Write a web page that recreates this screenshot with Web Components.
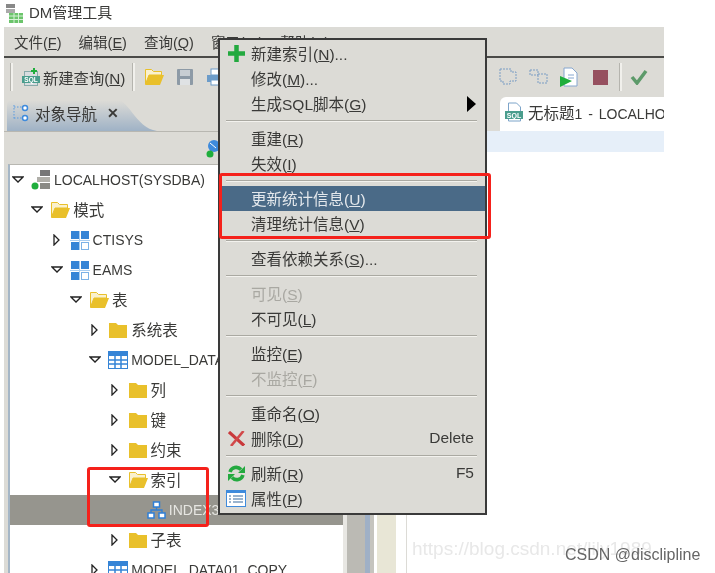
<!DOCTYPE html>
<html>
<head>
<meta charset="utf-8">
<style>
  html, body { margin: 0; padding: 0; background: #fff; }
  body { width: 715px; height: 573px; overflow: hidden; font-family: "Liberation Sans", "Noto Sans CJK SC", sans-serif; }
</style>
</head>
<body>
<dm-app></dm-app>

<script>
const ICONS = {
  folder: '<svg width="20" height="18" viewBox="0 0 20 18"><path d="M1 2h7l2 2h9v13H1z" fill="#e9c02b"/></svg>',
  folderOpen: '<svg width="20" height="18" viewBox="0 0 20 18"><path d="M1.500 16V1.500h6l2 2h8V7H5z" fill="#faf1cf" stroke="#e9c02b"/><path d="M1 17l4-10h15l-4 10z" fill="#e9c02b"/></svg>',
  schema: '<svg width="20" height="19" viewBox="0 0 20 19"><path d="M0 9.500h20M9.500 0v19" stroke="#a9cdf0"/><rect x="1" y="0" width="8" height="8" fill="#3584d6"/><rect x="11" y="0" width="8" height="8" fill="#3584d6"/><rect x="1" y="11" width="8" height="8" fill="#3584d6"/><rect x="11.500" y="11.500" width="7" height="7" fill="#fff" stroke="#7db2e6"/></svg>',
  table: '<svg width="20" height="18" viewBox="0 0 20 18"><rect x=".5" y=".5" width="19" height="17" fill="#fff" stroke="#3584d6"/><rect x="0" y="0" width="20" height="5" fill="#3584d6"/><path d="M1 9h18M1 13h18M7 5v12M13 5v12" stroke="#3584d6" stroke-width="1.500"/></svg>',
  index: '<svg width="19" height="18" viewBox="0 0 19 18"><g fill="#fff" stroke="#2f7fd6" stroke-width="1.500"><rect x="6.500" y="1" width="6" height="5"/><rect x="1" y="12" width="6" height="5"/><rect x="12" y="12" width="6" height="5"/></g><path d="M9.500 6v3M4 12V9h11v3" fill="none" stroke="#2f7fd6" stroke-width="1.300"/></svg>',
  server: '<svg width="20" height="20" viewBox="0 0 20 20"><rect x="9" y="0" width="10" height="6" fill="#777"/><rect x="6" y="7" width="13" height="5" fill="#b0afa9"/><rect x="9" y="13" width="10" height="6" fill="#8a8a85"/><circle cx="4" cy="16" r="3.500" fill="#1fae3c"/></svg>',
  sql: '<svg width="18" height="20" viewBox="0 0 18 20"><path d="M3.500 1h8l4 4v14h-12z" fill="#fff" stroke="#7da4c9"/><rect x="0" y="9" width="18" height="8" fill="#4a9d8d"/><text x="9" y="15.500" font-size="7" font-weight="700" fill="#fff" text-anchor="middle" font-family="Liberation Sans">SQL</text></svg>',
  sqlNew: '<svg width="18" height="20" viewBox="0 0 18 20"><rect x="2.500" y="4.500" width="13" height="14" fill="#d8dde0" stroke="#8aa"/><rect x="0" y="9" width="18" height="7" fill="#4a9d8d"/><text x="9" y="15" font-size="6.500" font-weight="700" fill="#fff" text-anchor="middle" font-family="Liberation Sans">SQL</text><path d="M12 1v6M9 4h6" stroke="#1fae3c" stroke-width="2"/></svg>',
  save: '<svg width="18" height="18" viewBox="0 0 18 18"><rect x="1" y="1" width="16" height="16" rx="1" fill="#8d9aa6"/><rect x="4" y="2" width="10" height="6" fill="#c8ced3"/><rect x="4" y="11" width="10" height="6" fill="#dfe2e4"/></svg>',
  print: '<svg width="18" height="18" viewBox="0 0 18 18"><rect x="5" y="1" width="8" height="6" fill="#fff" stroke="#6c9cc9"/><rect x="1" y="7" width="16" height="7" fill="#6c9cc9"/><rect x="5" y="12" width="8" height="5" fill="#fff" stroke="#6c9cc9"/></svg>',
  plus: '<svg width="17" height="17" viewBox="0 0 17 17"><path d="M8.500 0v17M0 8.500h17" stroke="#23a93f" stroke-width="4.500"/></svg>',
  cross: '<svg width="17" height="15" viewBox="0 0 17 15"><path d="M1 1l15 13.500" stroke="#c9393b" stroke-width="3.200"/><path d="M15.500 0L3 15" stroke="#d2494a" stroke-width="2.600"/></svg>',
  refresh: '<svg width="17" height="17" viewBox="0 0 17 17"><path d="M2 7a6.500 6.500 0 0 1 11-2.500" fill="none" stroke="#23a93f" stroke-width="3.500"/><path d="M15 10a6.500 6.500 0 0 1-11 2.500" fill="none" stroke="#23a93f" stroke-width="3.500"/><path d="M10 8h7V1zM7 9H0v7z" fill="#23a93f"/></svg>',
  props: '<svg width="20" height="17" viewBox="0 0 20 17"><rect x=".5" y=".5" width="19" height="16" fill="#fff" stroke="#3f8bdc"/><rect x="0" y="0" width="20" height="3" fill="#3f8bdc"/><path d="M3 6h2M3 9h2M3 12h2M7 6h10M7 9h10M7 12h10" stroke="#7a9cc0" stroke-width="1.500"/></svg>',
  nav: '<svg width="16" height="18" viewBox="0 0 16 18"><path d="M1 1v15M1 3h8M1 14h8" fill="none" stroke="#5a9be0" stroke-dasharray="1.500 1.500"/><circle cx="12" cy="4" r="2.500" fill="#fff" stroke="#3f8bdc" stroke-width="1.500"/><circle cx="12" cy="14" r="2.500" fill="#fff" stroke="#3f8bdc" stroke-width="1.500"/></svg>',
  check: '<svg width="18" height="16" viewBox="0 0 18 16"><path d="M2 8l5 6L16 2" fill="none" stroke="#5d9a6a" stroke-width="3.500"/></svg>',
  run: '<svg width="18" height="20" viewBox="0 0 18 20"><path d="M4 1h8l5 5v13H4z" fill="#fff" stroke="#86a6cf"/><path d="M8 8h6M8 11h6" stroke="#86a6cf"/><path d="M0 9l12 5-12 6z" fill="#1fae3c"/></svg>',
  stop: '<svg width="15" height="15" viewBox="0 0 15 15"><rect width="15" height="15" fill="#96505f"/></svg>',
  dash1: '<svg width="18" height="18" viewBox="0 0 18 18"><path d="M1 1h11v3h5v9h-6v3H4v-3H1z" fill="none" stroke="#7b9dc4" stroke-dasharray="2 1"/></svg>',
  dash2: '<svg width="19" height="16" viewBox="0 0 19 16"><path d="M1 1h8v5H1zM9 5h9v9H9z" fill="none" stroke="#7b9dc4" stroke-dasharray="2 1"/></svg>'
};

// one line of the object tree
class TreeRow extends HTMLElement {
  connectedCallback() {
    const depth = Number(this.getAttribute('depth'));
    const state = this.getAttribute('state');
    const icon = this.getAttribute('icon');
    const shadow = this.attachShadow({ mode: 'open' });
    shadow.innerHTML = `
      <style>
        :host { display: block; height: 30px; }
        .row { display: flex; align-items: center; height: 100%; gap: 3px; padding-left: ${2 + depth * 19.300}px; color: #3a3a38; font-size: 14px; white-space: nowrap; }
        :host([cjk]) .row { font-size: 15.500px; }
        :host([cjk]) .text { margin-top: -2px; }
        :host([selected]) .row { background: #96958e; color: #e6e6e2; }
        .arrow { width: 12px; height: 12px; flex: none; margin-right: 4px; }
        .icon { display: flex; flex: none; }
      </style>
      <div class="row">
        <svg class="arrow" viewBox="0 0 12 12">${
          state === 'open' ? '<path d="M1 3h10L6 8z" fill="#fff" stroke="#222" stroke-width="1.300"/>' :
          state === 'closed' ? '<path d="M3 1v10l5-5z" fill="#fff" stroke="#222" stroke-width="1.300"/>' : ''}</svg>
        <span class="icon">${ICONS[icon]}</span>
        <span class="text"><slot></slot></span>
      </div>`;
  }
}

// entry of the context menu
class MenuItem extends HTMLElement {
  connectedCallback() {
    const icon = this.getAttribute('icon');
    const key = this.getAttribute('key') || '';
    const shadow = this.attachShadow({ mode: 'open' });
    shadow.innerHTML = `
      <style>
        :host { display: flex; align-items: center; height: 25px; padding: 0 11px 0 31px; font-size: 15.500px; color: #3a3a38; white-space: nowrap; }
        :host([active]) { background: #4a6a87; color: #e4e8ec; }
        :host([disabled]) { color: #a9a8a2; }
        .icon { width: 20px; margin: 0 5px 0 -25px; display: flex; justify-content: center; }
        .label { flex: 1; margin-top: -2px; }
        .key { margin-top: -2px; }
        .arrow { width: 0; height: 0; margin-right: -2px; border-left: 9px solid #000; border-top: 8px solid transparent; border-bottom: 8px solid transparent; }
      </style>
      ${icon ? `<span class="icon">${ICONS[icon]}</span>` : ''}
      <span class="label"><slot></slot></span>
      <span class="key">${key}</span>
      ${this.hasAttribute('submenu') ? '<span class="arrow"></span>' : ''}`;
  }
}

class MenuSep extends HTMLElement {
  constructor() {
    super();
    this.attachShadow({ mode: 'open' }).innerHTML = `
      <style>
        :host { display: block; height: 10px; padding: 4px 8px 0 6px; box-sizing: border-box; }
        div { height: 1px; background: #aaa9a2; border-bottom: 1px solid #f3f2ee; }
      </style>
      <div></div>`;
  }
}

class ContextMenu extends HTMLElement {
  constructor() {
    super();
    this.attachShadow({ mode: 'open' }).innerHTML = `
      <style>
        :host { display: block; position: absolute; left: 218px; top: 38px; width: 269px; height: 477px; box-sizing: border-box; background: #dcdbd6; border: 2px solid #3a3a3a; padding: 1px 0; }
      </style>
      <slot></slot>`;
  }
}

class RedBox extends HTMLElement {
  constructor() {
    super();
    this.attachShadow({ mode: 'open' }).innerHTML = `
      <style>
        :host { display: block; position: absolute; box-sizing: border-box; border: 3.500px solid #f5211b; border-radius: 3px; pointer-events: none; }
      </style>`;
  }
}

class DmApp extends HTMLElement {
  constructor() {
    super();
    const u = c => `<u>${c}</u>`;
    this.attachShadow({ mode: 'open' }).innerHTML = `
      <style>
        :host { display: block; position: relative; width: 715px; height: 573px; overflow: hidden; filter: blur(0.45px); font-family: "Liberation Sans", "Noto Sans CJK SC", sans-serif; }
        .title { display: flex; align-items: center; gap: 5px; height: 23px; padding: 0 0 4px 6px; font-size: 15px; color: #3a3a38; }
        .title svg { margin-top: 3px; }
        .window { margin-left: 4px; width: 660px; background: #dcdbd6; }
        .menubar { display: flex; gap: 17px; height: 31px; align-items: center; padding-left: 10px; font-size: 14.500px; color: #3a3a38; border-bottom: 2px solid #4a4a48; box-sizing: border-box; }
        .toolbar { display: flex; align-items: center; height: 38px; padding: 0 16px 0 6px; font-size: 15.300px; color: #3a3a38; box-sizing: border-box; white-space: nowrap; }
        .grip { width: 2px; height: 28px; background: #f1f0ec; border-left: 1px solid #b5b4ae; flex: none; }
        .tool-new { display: flex; align-items: center; gap: 3px; margin: 0 7px 0 9px; }
        .tool { display: flex; }
        .right-tools { margin-left: auto; display: flex; gap: 12px; align-items: center; }
        .tabrow { display: flex; height: 35px; }
        .navtab { display: flex; align-items: center; gap: 6px; width: 152px; height: 34px; margin: 1px 0 0 3px; padding: 0 0 3px 6px; box-sizing: border-box; font-size: 15.500px; color: #3a3a38; background: linear-gradient(#dcdbd6 10%, #9fb2c6); clip-path: path('M0 34V10Q0 0 10 0H104C122 0 128 31 150 34Z'); }
        .close { font-size: 14px; font-weight: 700; margin-left: 4px; }
        .etab { display: flex; align-items: center; gap: 5px; width: 164px; margin: 1px 0 0 auto; padding: 0 0 4px 5px; box-sizing: border-box; font-size: 14px; word-spacing: 2px; color: #3a3a38; background: #fff; border-radius: 6px 0 0 0; white-space: nowrap; overflow: hidden; }
        .etab b { font-weight: 400; font-size: 15.500px; }
        .etab svg { flex: none; }
        .panes { display: flex; height: 442px; background: #fff; margin-left: 4px; width: 660px; }
        .nav { width: 339px; flex: none; display: flex; flex-direction: column; background: #dcdbd6; }
        .navbar { height: 33px; flex: none; border-top: 1px solid #b8b7b1; display: flex; align-items: center; padding-left: 200px; box-sizing: border-box; }
        .tree { flex: 1; background: #fff; margin-left: 4px; border-left: 2px solid #a5b6c6; overflow: hidden; border-top: 1px solid #b8b7b1; }
        .sash { width: 4px; flex: none; background: #e8e7e3; }
        .scroll { width: 18px; flex: none; background: #bbbab4; }
        .sash-blue { width: 5px; flex: none; background: #9fb0c6; }
        .sash-gray { width: 4px; flex: none; background: #c5c4be; }
        .editor { flex: 1; margin-left: 3px; display: flex; flex-direction: column; }
        .estrip { height: 21px; flex: none; background: #e6eff9; }
        .ebody { flex: 1; display: flex; }
        .lines { width: 19px; background: #e8e6d6; }
        .margin { width: 10px; border-right: 1px solid #dcdbd6; }
        .watermark { position: absolute; left: 412px; top: 538px; font-size: 19px; color: #e8e8e8; white-space: nowrap; }
        .csdn { position: absolute; left: 565px; top: 546px; font-size: 16px; color: #666; white-space: nowrap; }
        u { text-underline-offset: 1px; }
      </style>
      <div class="title">
        <svg width="18" height="20" viewBox="0 0 18 20"><rect x="0" y="1" width="9" height="4" fill="#888"/><rect x="0" y="6" width="9" height="4" fill="#aaa"/><rect x="3" y="10" width="14" height="10" fill="#6bc46b"/><path d="M3 13h14M3 16.500h14M8 10v10M12.500 10v10" stroke="#d6f0d6"/></svg>
        <span>DM管理工具</span>
      </div>
      <div class="window">
        <div class="menubar">
          <span>文件(${u('F')})</span><span>编辑(${u('E')})</span><span>查询(${u('Q')})</span><span>窗口(${u('W')})</span><span>帮助(${u('H')})</span>
        </div>
        <div class="toolbar">
          <span class="grip"></span>
          <span class="tool-new">${ICONS.sqlNew}<span>新建查询(${u('N')})</span></span>
          <span class="grip"></span>
          <span class="tool" style="margin-left:9px">${ICONS.folderOpen}</span>
          <span class="tool" style="margin-left:12px">${ICONS.save}</span>
          <span class="tool" style="margin-left:12px">${ICONS.print}</span>
          <span class="right-tools">${ICONS.dash1}${ICONS.dash2}${ICONS.run}<span class="tool" style="margin-left:3px">${ICONS.stop}</span><span class="grip" style="margin-left:-1px"></span><span class="tool" style="margin-left:-4px">${ICONS.check}</span></span>
        </div>
        <div class="tabrow">
          <div class="navtab">${ICONS.nav}<span>对象导航</span><span class="close">✕</span></div>
          <div class="etab">${ICONS.sql}<span><b>无标题</b>1 - LOCALHOST</span></div>
        </div>
      </div>
      <div class="panes">
        <div class="nav">
          <div class="navbar"><svg width="20" height="20" viewBox="0 0 20 20"><circle cx="10" cy="8" r="6" fill="#3f8bdc"/><path d="M6 5l6 5" stroke="#fff"/><circle cx="6" cy="16" r="3.500" fill="#1fae3c"/></svg></div>
          <div class="tree">
            <tree-row depth="0" state="open" icon="server">LOCALHOST(SYSDBA)</tree-row>
            <tree-row depth="1" state="open" icon="folderOpen" cjk>模式</tree-row>
            <tree-row depth="2" state="closed" icon="schema">CTISYS</tree-row>
            <tree-row depth="2" state="open" icon="schema">EAMS</tree-row>
            <tree-row depth="3" state="open" icon="folderOpen" cjk>表</tree-row>
            <tree-row depth="4" state="closed" icon="folder" cjk>系统表</tree-row>
            <tree-row depth="4" state="open" icon="table">MODEL_DATA01</tree-row>
            <tree-row depth="5" state="closed" icon="folder" cjk>列</tree-row>
            <tree-row depth="5" state="closed" icon="folder" cjk>键</tree-row>
            <tree-row depth="5" state="closed" icon="folder" cjk>约束</tree-row>
            <tree-row depth="5" state="open" icon="folderOpen" cjk>索引</tree-row>
            <tree-row depth="6" state="none" icon="index" selected>INDEX33</tree-row>
            <tree-row depth="5" state="closed" icon="folder" cjk>子表</tree-row>
            <tree-row depth="4" state="closed" icon="table">MODEL_DATA01_COPY</tree-row>
          </div>
        </div>
        <div class="sash"></div>
        <div class="scroll"></div>
        <div class="sash-blue"></div>
        <div class="sash-gray"></div>
        <div class="editor">
          <div class="estrip"></div>
          <div class="ebody"><div class="lines"></div><div class="margin"></div></div>
        </div>
      </div>

      <context-menu>
        <menu-item icon="plus">新建索引(${u('N')})...</menu-item>
        <menu-item>修改(${u('M')})...</menu-item>
        <menu-item submenu>生成SQL脚本(${u('G')})</menu-item>
        <menu-sep></menu-sep>
        <menu-item>重建(${u('R')})</menu-item>
        <menu-item>失效(${u('I')})</menu-item>
        <menu-sep></menu-sep>
        <menu-item active>更新统计信息(${u('U')})</menu-item>
        <menu-item>清理统计信息(${u('V')})</menu-item>
        <menu-sep></menu-sep>
        <menu-item>查看依赖关系(${u('S')})...</menu-item>
        <menu-sep></menu-sep>
        <menu-item disabled>可见(${u('S')})</menu-item>
        <menu-item>不可见(${u('L')})</menu-item>
        <menu-sep></menu-sep>
        <menu-item>监控(${u('E')})</menu-item>
        <menu-item disabled>不监控(${u('F')})</menu-item>
        <menu-sep></menu-sep>
        <menu-item>重命名(${u('O')})</menu-item>
        <menu-item icon="cross" key="Delete">删除(${u('D')})</menu-item>
        <menu-sep></menu-sep>
        <menu-item icon="refresh" key="F5">刷新(${u('R')})</menu-item>
        <menu-item icon="props">属性(${u('P')})</menu-item>
      </context-menu>

      <red-box style="left:219px;top:173px;width:272px;height:66px"></red-box>
      <red-box style="left:87px;top:467px;width:122px;height:60px"></red-box>
      <div class="watermark">https://blog.csdn.net/lily1989</div>
      <div class="csdn">CSDN @disclipline</div>
    `;
  }
}

customElements.define('tree-row', TreeRow);
customElements.define('menu-item', MenuItem);
customElements.define('menu-sep', MenuSep);
customElements.define('context-menu', ContextMenu);
customElements.define('red-box', RedBox);
customElements.define('dm-app', DmApp);
</script>
</body>
</html>
